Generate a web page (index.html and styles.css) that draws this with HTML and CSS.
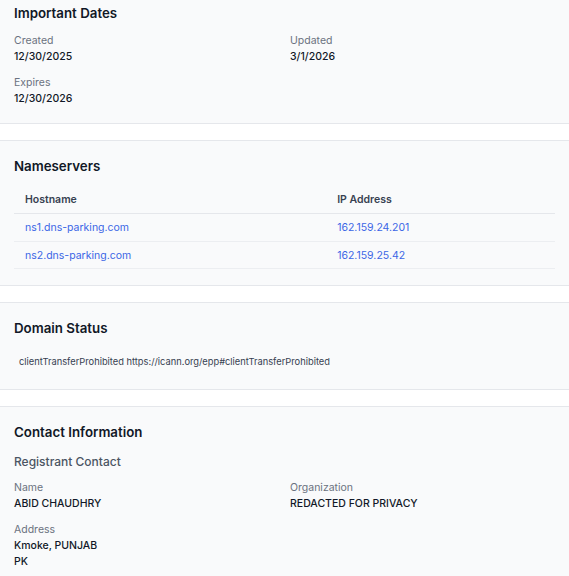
FILE: index.html
```html
<!DOCTYPE html>
<html lang="en">
<head>
    <meta charset="UTF-8">
    <meta name="viewport" content="width=device-width, initial-scale=1.0">
    <title>Domain Lookup</title>
    <link rel="stylesheet" href="styles.css">
</head>
<body>
    <div class="results">
        <section class="card">
            <h2 class="card-title">Important Dates</h2>
            <div class="field-grid">
                <div class="field">
                    <div class="field-label">Created</div>
                    <div class="field-value">12/30/2025</div>
                </div>
                <div class="field">
                    <div class="field-label">Updated</div>
                    <div class="field-value">3/1/2026</div>
                </div>
                <div class="field">
                    <div class="field-label">Expires</div>
                    <div class="field-value">12/30/2026</div>
                </div>
            </div>
        </section>

        <section class="card">
            <h2 class="card-title">Nameservers</h2>
            <table class="ns-table">
                <thead>
                    <tr>
                        <th class="col-host">Hostname</th>
                        <th>IP Address</th>
                    </tr>
                </thead>
                <tbody>
                    <tr>
                        <td><a href="#">ns1.dns-parking.com</a></td>
                        <td><a href="#">162.159.24.201</a></td>
                    </tr>
                    <tr>
                        <td><a href="#">ns2.dns-parking.com</a></td>
                        <td><a href="#">162.159.25.42</a></td>
                    </tr>
                </tbody>
            </table>
        </section>

        <section class="card">
            <h2 class="card-title">Domain Status</h2>
            <ul class="status-list">
                <li>clientTransferProhibited https://icann.org/epp#clientTransferProhibited</li>
            </ul>
        </section>

        <section class="card">
            <h2 class="card-title">Contact Information</h2>
            <h3 class="contact-title">Registrant Contact</h3>
            <div class="field-grid">
                <div class="field">
                    <div class="field-label">Name</div>
                    <div class="field-value">ABID CHAUDHRY</div>
                </div>
                <div class="field">
                    <div class="field-label">Organization</div>
                    <div class="field-value">REDACTED FOR PRIVACY</div>
                </div>
                <div class="field">
                    <div class="field-label">Address</div>
                    <div class="field-value">Kmoke, PUNJAB<br>PK</div>
                </div>
            </div>
        </section>
    </div>
</body>
</html>
```

FILE: styles.css
```css
body {
    font-family: Inter, "Noto Sans", sans-serif;
    margin: 0;
    padding: 0;
    background-color: #ffffff;
    color: #111827;
}

/* page is scrolled a little, so the first card is clipped at the top */
.results {
    display: flex;
    flex-direction: column;
    gap: 16px;
    margin-top: -13px;
}

.card {
    background-color: #f9fafb;
    border-top: 1px solid #e5e7eb;
    border-bottom: 1px solid #e5e7eb;
    padding: 15px 14px 16px;
}

.card-title {
    margin: 0 0 10px;
    font-size: 13.3px;
    line-height: 20px;
    font-weight: 600;
    color: #111827;
}

.field-grid {
    display: grid;
    grid-template-columns: 1fr 1fr;
    column-gap: 11px;
    row-gap: 10px;
}

.field-label {
    font-size: 10.5px;
    line-height: 16px;
    color: #6b7280;
}

.field-value {
    font-size: 10.5px;
    line-height: 16px;
    font-weight: 500;
    color: #111827;
}

.ns-table {
    width: 100%;
    border-collapse: collapse;
    font-size: 10.5px;
}

.ns-table th {
    text-align: left;
    font-weight: 600;
    color: #374151;
    padding: 6px 11px;
    line-height: 15px;
    border-bottom: 1px solid #e5e7eb;
}

.ns-table .col-host {
    width: 57.7%;
}

.ns-table td {
    padding: 6px 11px 5.5px;
    line-height: 15px;
    border-bottom: 1px solid #eceef1;
}

.ns-table a {
    color: #3b66e6;
    text-decoration: none;
}

.status-list {
    list-style: none;
    margin: 0;
    padding: 7px 5px 4px;
}

.status-list li {
    font-size: 9.3px;
    line-height: 14px;
    color: #374151;
}

.card-title + .contact-title {
    margin-top: 12px;
}

.contact-title {
    margin: 0 0 10px;
    font-size: 12px;
    line-height: 16px;
    font-weight: 500;
    color: #4b5563;
}
```
